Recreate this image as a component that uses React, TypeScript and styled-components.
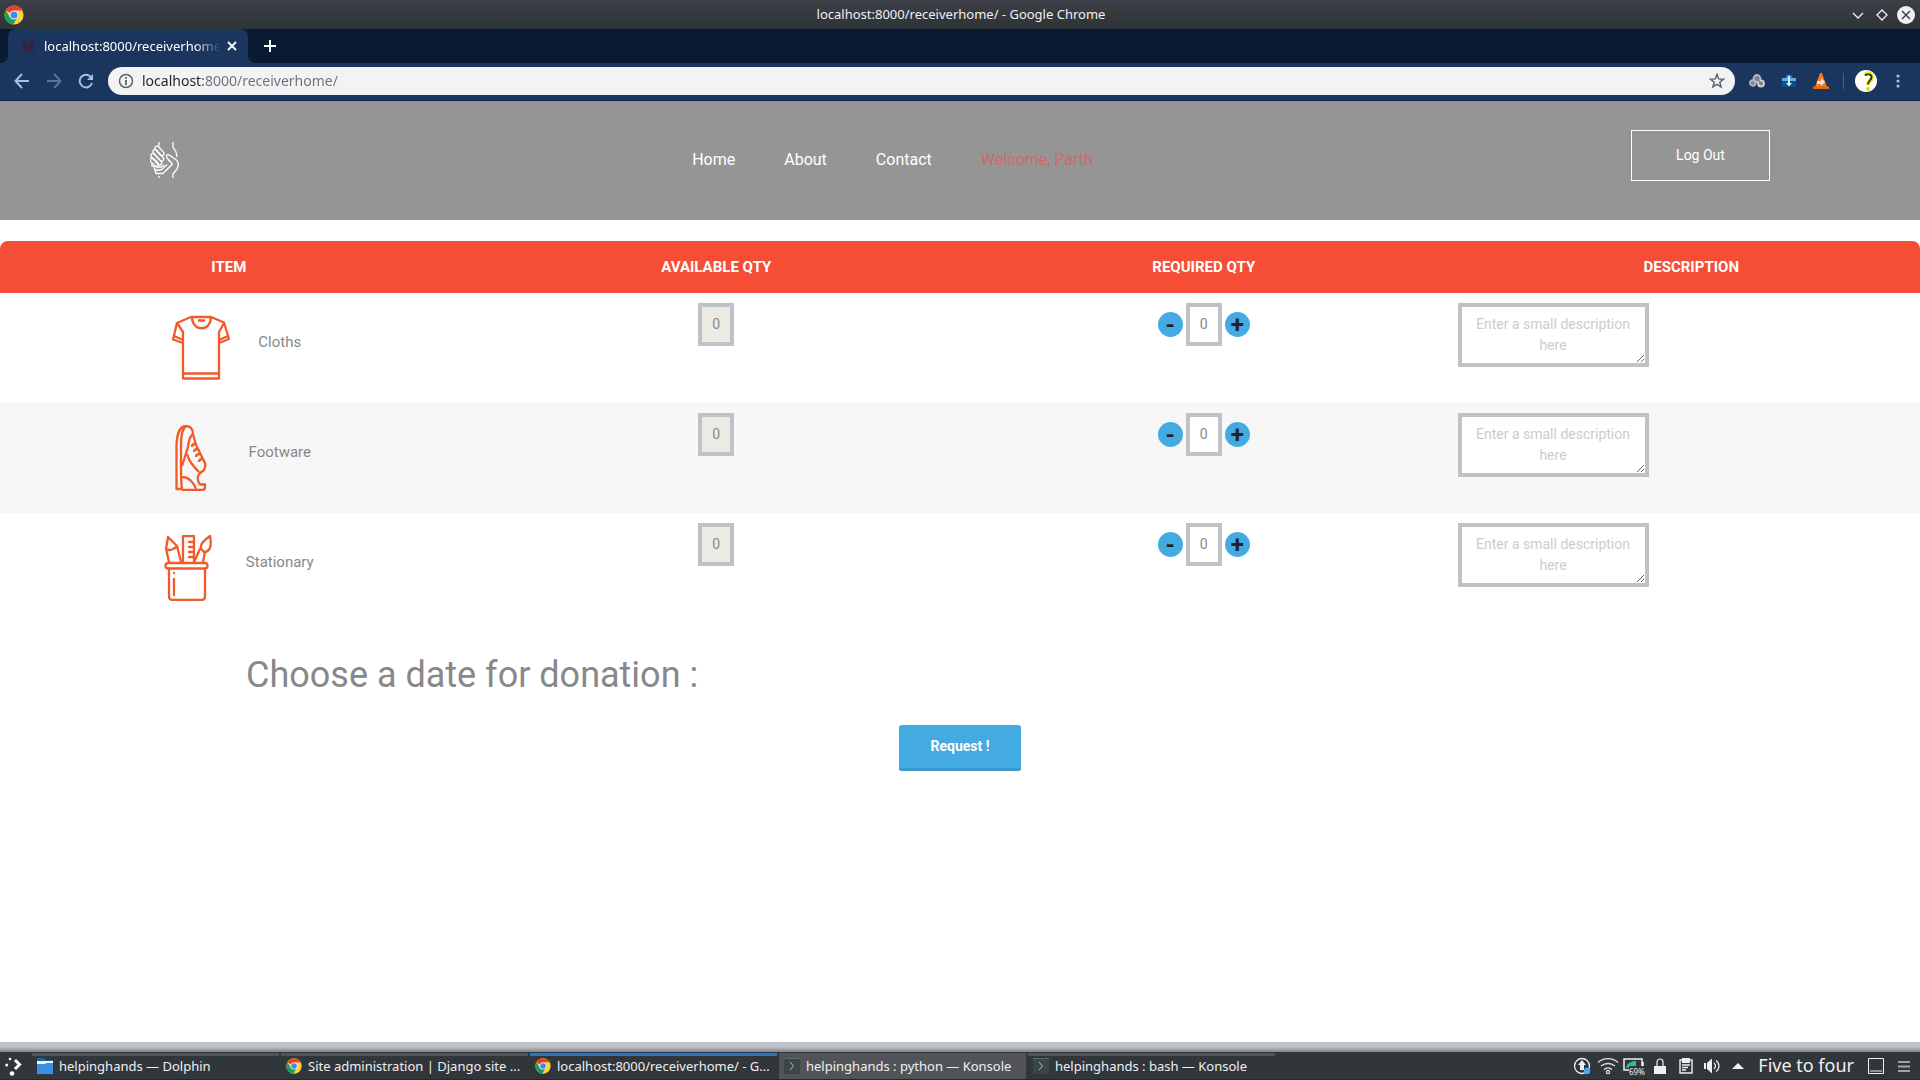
import React, { useState } from "react";
import styled, { createGlobalStyle, css } from "styled-components";

const GlobalStyle = createGlobalStyle`
  *, *::before, *::after { box-sizing: border-box; }
  body { margin: 0; background: #fff; }
  button, input, textarea { font: inherit; margin: 0; }
`;

const ui = `"Noto Sans", "Open Sans", sans-serif`;
const web = `Roboto, "Liberation Sans", sans-serif`;

const Screen = styled.div`
  min-height: 100vh;
  display: flex;
  flex-direction: column;
  font-family: ${ui};
  font-size: 13px;
`;

/* ---------- window frame ---------- */

const TitleBar = styled.header`
  display: grid;
  grid-template-columns: 1fr auto 1fr;
  align-items: center;
  height: 29px;
  padding: 0 2px 0 4px;
  color: #eff0f1;
  background: linear-gradient(#3d4048, #31363a 75%, #2f3437);
`;

const AppMark = styled.span`
  display: flex;
`;

const WindowTitle = styled.span`
  line-height: 29px;
`;

const WindowButtons = styled.div`
  display: flex;
  justify-content: flex-end;
`;

const BareButton = styled.button`
  display: flex;
  align-items: center;
  justify-content: center;
  padding: 0;
  border: 0;
  background: none;
  color: inherit;
`;

const WindowButton = styled(BareButton)`
  width: 24px;
  height: 28px;
`;

const TabStrip = styled.div`
  display: flex;
  height: 34px;
  padding-left: 8px;
  background: #0a1a33;
`;

const Tab = styled.div`
  position: relative;
  display: flex;
  align-items: center;
  width: 240px;
  padding: 0 8px 0 12px;
  border-radius: 8px 8px 0 0;
  background: #1a355e;
  color: #fff;

  &::before,
  &::after {
    content: "";
    position: absolute;
    bottom: 0;
    width: 8px;
    height: 8px;
  }
  &::before {
    right: 100%;
    background: radial-gradient(circle at 0 0, transparent 8px, #1a355e 8px);
  }
  &::after {
    left: 100%;
    background: radial-gradient(circle at 100% 0, transparent 8px, #1a355e 8px);
  }
`;

const TabTitle = styled.span`
  flex: 1;
  min-width: 0;
  margin: 0 4px 0 8px;
  overflow: hidden;
  white-space: nowrap;
  mask-image: linear-gradient(to right, #000 86%, transparent);
`;

const TabClose = styled(BareButton)`
  width: 16px;
  height: 16px;
`;

const NewTab = styled(BareButton)`
  width: 28px;
  margin-left: 8px;
  color: #fff;
`;

const Toolbar = styled.div`
  display: flex;
  align-items: center;
  gap: 4px;
  height: 38px;
  padding: 0 8px 2px;
  border-bottom: 1px solid #10264a;
  background: #1a355e;
  color: #a9bde0;
`;

const ToolButton = styled(BareButton)<{ $dim?: boolean }>`
  width: 28px;
  height: 28px;
  opacity: ${(p) => (p.$dim ? 0.45 : 1)};
`;

const AddressBar = styled.form`
  flex: 1;
  display: flex;
  align-items: center;
  gap: 8px;
  height: 28px;
  margin: 0 4px;
  padding: 0 10px;
  border-radius: 14px;
  background: #f1f3f4;
  color: #5f6368;
`;

const Address = styled.input`
  flex: 1;
  min-width: 0;
  height: 28px;
  padding: 0;
  border: 0;
  outline: 0;
  font-size: 14px;
  color: transparent;
  background: linear-gradient(to right, #202124 61px, #6d7175 61px);
  -webkit-background-clip: text;
  background-clip: text;
`;

const Divider = styled.span`
  width: 1px;
  height: 16px;
  margin: 0 4px;
  background: #43608c;
`;

/* ---------- web page ---------- */

const Page = styled.main`
  flex: 1;
  font-family: ${web};
  color: #888;
`;

const SiteHeader = styled.div`
  display: flex;
  align-items: center;
  justify-content: space-between;
  height: 119px;
  padding: 0 150px 2px;
  background: #959595;
`;

const Brand = styled.a`
  display: flex;
  color: #fff;
`;

const Menu = styled.nav`
  display: flex;
  gap: 49px;
  padding-right: 26px;
`;

const MenuLink = styled.a<{ $accent?: boolean }>`
  font-size: 16px;
  line-height: 24px;
  text-decoration: none;
  color: ${(p) => (p.$accent ? "#cd6b6b" : "#fff")};
`;

const LogOut = styled.button`
  width: 139px;
  height: 51px;
  margin-bottom: 8px;
  padding: 0 0 2px;
  border: 1px solid #fff;
  background: none;
  color: #fff;
  font-size: 14px;
`;

const TableFrame = styled.div`
  margin-top: 21px;
  overflow: hidden;
  border-radius: 8px 8px 0 0;
`;

const ItemTable = styled.table`
  width: calc(100% + 30px);
  margin-left: -15px;
  table-layout: fixed;
  border-collapse: collapse;
`;

const HeadCell = styled.th`
  height: 52px;
  padding: 0;
  background: #f64d36;
  color: #fff;
  font-size: 15px;
  font-weight: 700;
  line-height: 20px;
`;

const Row = styled.tr`
  height: 110px;
  &:nth-child(even) {
    background: #f7f7f7;
  }
`;

const Cell = styled.td`
  padding: 10px;
  vertical-align: top;
  text-align: center;
`;

const Item = styled.div`
  display: flex;
  justify-content: center;
  gap: 24px;
  padding: 12px 0 0 12px;
  font-size: 15px;
  line-height: 54px;

  svg {
    flex: none;
  }
`;

const field = css`
  border: 4px solid #bdc3c7;
  border-radius: 0;
  outline: 0;
  color: #888;
  text-align: center;
  font-size: 14px;
`;

const Quantity = styled.input`
  ${field}
  display: inline-block;
  width: 36px;
  height: 43px;
  padding: 0 0 2px;
  background: #fff;
  vertical-align: top;

  &:read-only {
    background: #ebebe4;
  }
`;

const Stepper = styled.div`
  display: flex;
  align-items: center;
  justify-content: center;
  gap: 3px;
`;

const StepButton = styled(BareButton)`
  width: 25px;
  height: 25px;
  border-radius: 50%;
  background: #43abe2;
  color: #212529;
  font-size: 24px;
  font-weight: 700;
  line-height: 24px;
`;

const Description = styled.textarea`
  ${field}
  display: block;
  width: 191px;
  height: 64px;
  padding: 7px 6px;
  line-height: 21px;
  background: #fff;
  overflow: hidden;
  resize: both;

  &::placeholder {
    color: #ccc;
  }
`;

const DateHeading = styled.h1`
  margin: 28px 0 0 246px;
  font-size: 36px;
  font-weight: 400;
  line-height: 48px;
`;

const RequestButton = styled.button`
  display: block;
  width: 122px;
  height: 46px;
  margin: 26px auto 0;
  padding: 0 0 4px;
  border: 0;
  border-radius: 3px;
  background: #43abe2;
  box-shadow: inset 0 -3px 0 #3c99cb;
  color: #fff;
  font-size: 14px;
  font-weight: 700;
`;

const PageEdge = styled.div`
  height: 10px;
  background: linear-gradient(#bdc3c7 50%, #7f8486);
`;

/* ---------- desktop panel ---------- */

const Panel = styled.footer`
  display: flex;
  height: 28px;
  padding-right: 2px;
  border-bottom: 1px solid #24282b;
  background: #31363b;
  color: #eff0f1;
`;

const Launcher = styled(BareButton)`
  width: 32px;
  padding-right: 4px;
`;

const TaskList = styled.div`
  display: flex;
  gap: 2px;
  flex: 1;
`;

const Task = styled.button<{ $bar: string; $fill?: string }>`
  display: flex;
  align-items: center;
  gap: 6px;
  width: 247px;
  margin-top: 1px;
  padding: 0 5px 3px;
  border: 0;
  border-top: 3px solid ${(p) => p.$bar};
  background: ${(p) => p.$fill || "transparent"};
  color: inherit;
  white-space: nowrap;

  svg {
    flex: none;
  }
`;

const Tray = styled.div`
  display: flex;
  align-items: center;
`;

const TrayButton = styled(BareButton)<{ $wide?: boolean }>`
  width: ${(p) => (p.$wide ? 28 : 26)}px;
  height: 27px;
`;

const Clock = styled.time`
  margin: 0 8px 0 7px;
  font-size: 18px;
  line-height: 27px;
`;

/* ---------- drawings ---------- */

const ChromeIcon = ({ size }: { size: number }) => (
  <svg width={size} height={size} viewBox="0 0 24 24">
    <circle cx="12" cy="12" r="11.5" fill="#fdd23e" />
    <path d="M12 12 2 6.3A11.5 11.5 0 0 1 22 6.5H12z" fill="#e2412f" />
    <path d="M12 12 7.3 15 2 6.3A11.5 11.5 0 0 0 11 23.5l5-8.5z" fill="#18a05d" />
    <circle cx="12" cy="12" r="5.4" fill="#f1f1f1" />
    <circle cx="12" cy="12" r="4.2" fill="#4285f4" />
  </svg>
);

const HandsIcon = ({ width, height }: { width: number; height: number }) => (
  <svg width={width} height={height} viewBox="0 0 30 36" fill="none" stroke="currentColor" strokeWidth="1.3">
    <path d="M9 0v4M9 34v2M23 0v5l3 5 1.2 5" />
    <g strokeLinejoin="round">
      <rect x="-2" y="-2" width="11.5" height="4.2" rx="2.1" transform="translate(7 6) rotate(48)" />
      <rect x="-2" y="-2" width="14" height="4.2" rx="2.1" transform="translate(5 9.5) rotate(48)" />
      <rect x="-2" y="-2" width="14" height="4.2" rx="2.1" transform="translate(3 13.5) rotate(48)" />
      <rect x="-2" y="-2" width="10" height="4.2" rx="2.1" transform="translate(2.2 18) rotate(44)" />
      <path d="M2 21v3l3 1M4 24.5l1 3.5 6 0 6-5.5M5 28l1 3.5h7l9.5-9.5-4.5-5M6 25h5l3-2M23 36v-4l4-5 1.5-4-1.5-4.500-7-5c-2-1.500-4-.5-3.500 1.500l3 4.500" />
    </g>
  </svg>
);

const ShirtIcon = () => (
  <svg width="66" height="66" viewBox="0 0 66 66" fill="none" stroke="#f15a29" strokeWidth="2.3" strokeLinejoin="round">
    <path d="M23 2h20l13 5.500L61 24l-10 4v35.500H15V28L5 24.500 9 8z" />
    <path d="M24 2c0 15 19 15 19 0M30 5.500h7M9 8l6 9v11M56 8l-5 9v11M6 21l9 4M60 21l-9 4M15 58.500h36" />
  </svg>
);

const ShoeIcon = () => (
  <svg width="66" height="66" viewBox="0 0 66 66" fill="none" stroke="#f15a29" strokeWidth="2.3" strokeLinejoin="round">
    <path d="M23 64H17.500V20C18 7 22 1 27 1c4 0 7 3 7 8l3 11 9 18c1 3 0 5-1 7l-5 4c-2 4-1 8 1 10.500h5V62c0 2-1 3-3 3H25c-2 0-2-1-2-1z" />
    <path d="M27 1c-4 3-5 10-5 18v23c0 8 0 15 1 22M34 9c-5 4-4 9-5 13l-6 19M28 29c2 8 7 13 12 18M23 52c7 0 12 6 14 12M33 22c0-2 1-3 3-3M35 27c0-2 1-3 4-3M37 32c0-2 1-3 4-3M40 37c0-2 1-3 4-3" />
  </svg>
);

const PotIcon = () => (
  <svg width="66" height="66" viewBox="0 0 66 66" fill="none" stroke="#f15a29" strokeWidth="2.3" strokeLinejoin="round" strokeLinecap="round">
    <rect x="9.500" y="28" width="42" height="5.500" rx="2.700" />
    <path d="M13 33.500V61q0 4 4 4h28q4 0 4-4V33.500M18 38v.1M18 44v16" />
    <path d="m13 27-3-13 2-12 9 9 4 16M10 14c3 2 8 1 11-3M27 27V1h11v26M33 7h4M33 12h4M33 17h4M33 22h4" />
    <path d="M48 17c-5-4-5-8 6-16 2 10 0 16-6 16zM44 14l-6 13M49 17l-2 10" />
  </svg>
);

const Svg16 = ({ children, size = 16 }: { children: React.ReactNode; size?: number }) => (
  <svg width={size} height={size} viewBox="0 0 16 16" fill="none" stroke="currentColor" strokeWidth="2">
    {children}
  </svg>
);

const ConsoleIcon = () => (
  <svg width="16" height="16" viewBox="0 0 16 16">
    <path d="M0 0h16v16H0z" fill="#3a4547" />
    <path d="M0 0h16v1H0z" fill="#5d6a6c" />
    <path d="m6 4 3.500 4L6 12" fill="none" stroke="#b4bfc0" />
  </svg>
);

const FolderIcon = () => (
  <svg width="16" height="16" viewBox="0 0 16 16">
    <path d="M0 0h7l2 2h7v5H0z" fill="#18639b" />
    <path d="M0 3h16v3H0z" fill="#f4f9fc" />
    <path d="M0 6h8l1-1h7v11H0z" fill="#3792e6" />
  </svg>
);

/* ---------- data ---------- */

const items = [
  { name: "Cloths", Icon: ShirtIcon },
  { name: "Footware", Icon: ShoeIcon },
  { name: "Stationary", Icon: PotIcon },
];

const tasks = [
  { title: "helpinghands — Dolphin", bar: "#4f5357", icon: <FolderIcon /> },
  { title: "Site administration | Django site ...", bar: "#4f5357", icon: <ChromeIcon size={16} /> },
  { title: "localhost:8000/receiverhome/ - G...", bar: "#2778c9", icon: <ChromeIcon size={16} /> },
  { title: "helpinghands : python — Konsole", bar: "#505459", fill: "#505459", icon: <ConsoleIcon /> },
  { title: "helpinghands : bash — Konsole", bar: "#4f5357", icon: <ConsoleIcon /> },
];

const ItemRow = ({ name, Icon }: { name: string; Icon: () => React.JSX.Element }) => {
  const [count, setCount] = useState(0);
  return (
    <Row>
      <Cell>
        <Item>
          <Icon />
          <span>{name}</span>
        </Item>
      </Cell>
      <Cell>
        <Quantity aria-label={`${name} available`} value="0" readOnly />
      </Cell>
      <Cell>
        <Stepper>
          <StepButton aria-label={`Fewer ${name}`} onClick={() => setCount(Math.max(0, count - 1))}>-</StepButton>
          <Quantity
            aria-label={`${name} required`}
            inputMode="numeric"
            value={count}
            onChange={(e) => setCount(Number(e.target.value) || 0)}
          />
          <StepButton aria-label={`More ${name}`} onClick={() => setCount(count + 1)}>+</StepButton>
        </Stepper>
      </Cell>
      <Cell>
        <Description aria-label={`${name} description`} placeholder="Enter a small description here" />
      </Cell>
    </Row>
  );
};

export default function App() {
  return (
    <Screen>
      <GlobalStyle />
      <TitleBar>
        <AppMark><ChromeIcon size={20} /></AppMark>
        <WindowTitle>localhost:8000/receiverhome/ - Google Chrome</WindowTitle>
        <WindowButtons>
          <WindowButton aria-label="Minimize">
            <svg width="12" height="12" viewBox="0 0 12 12" fill="none" stroke="currentColor" strokeWidth="1.300"><path d="m1 4 5 5 5-5" /></svg>
          </WindowButton>
          <WindowButton aria-label="Maximize">
            <svg width="12" height="12" viewBox="0 0 12 12" fill="none" stroke="currentColor" strokeWidth="1.300"><path d="m6 1 5 5-5 5-5-5z" /></svg>
          </WindowButton>
          <WindowButton aria-label="Close">
            <svg width="18" height="18" viewBox="0 0 18 18"><circle cx="9" cy="9" r="9" fill="#eff0f1" /><path d="m5 5 8 8m0-8-8 8" stroke="#31363b" strokeWidth="1.300" /></svg>
          </WindowButton>
        </WindowButtons>
      </TitleBar>

      <TabStrip>
        <Tab>
          <svg width="16" height="16" viewBox="-3 0 36 36" fill="none" stroke="#4b1730" strokeWidth="2.500">
            <path d="m8 4 8 8M5 9l10 11M2 14l12 12M2 20l5 9h8l8-8-5-6M9 0v5M9 32v4M23 0v5l5 9M19 13l9 7v6l-5 6v4" />
          </svg>
          <TabTitle>localhost:8000/receiverhome/</TabTitle>
          <TabClose aria-label="Close tab"><svg width="10" height="10" viewBox="0 0 10 10" stroke="#fff" strokeWidth="1.800"><path d="m1 1 8 8m0-8-8 8" /></svg></TabClose>
        </Tab>
        <NewTab aria-label="New tab"><svg width="12" height="12" viewBox="0 0 12 12" stroke="#fff" strokeWidth="2"><path d="M6 0v12M0 6h12" /></svg></NewTab>
      </TabStrip>

      <Toolbar>
        <ToolButton aria-label="Back"><Svg16><path d="M15 8H2M8 1 1.500 8 8 15" /></Svg16></ToolButton>
        <ToolButton aria-label="Forward" $dim><Svg16><path d="M1 8h13M8 1l6.500 7L8 15" /></Svg16></ToolButton>
        <ToolButton aria-label="Reload"><Svg16><path d="M13.200 4.500A6.300 6.300 0 1 0 14 10" /><path d="M15 1v6H9z" fill="currentColor" stroke="none" /></Svg16></ToolButton>
        <AddressBar onSubmit={(e) => e.preventDefault()}>
          <svg width="16" height="16" viewBox="0 0 16 16" fill="none" stroke="currentColor" strokeWidth="1.500">
            <circle cx="8" cy="8" r="6.500" /><path d="M8 7v5M8 4v1.700" strokeWidth="1.800" />
          </svg>
          <Address aria-label="Address" defaultValue="localhost:8000/receiverhome/" />
          <BareButton type="button" aria-label="Bookmark this page">
            <svg width="16" height="16" viewBox="0 0 16 16" fill="none" stroke="currentColor" strokeWidth="1.500">
              <path d="m8 1.500 1.700 4.400 4.800.3-3.700 3 1.300 4.700L8 11.300l-4.100 2.600 1.300-4.700-3.700-3 4.800-.3z" />
            </svg>
          </BareButton>
        </AddressBar>
        <ToolButton aria-label="Extension: chain">
          <svg width="16" height="16" viewBox="0 0 16 16" fill="#85898d" stroke="#b4b7b9" strokeWidth="1.800">
            <circle cx="8" cy="5.500" r="3.500" /><circle cx="3.800" cy="10" r="2.800" /><circle cx="12" cy="10.500" r="3" stroke="#d0d2d3" /><path d="m7 5 6 6" stroke="#777c80" strokeWidth="1.500" />
          </svg>
        </ToolButton>
        <ToolButton aria-label="Extension: downloads">
          <svg width="16" height="16" viewBox="0 0 16 16">
            <circle cx="8" cy="5" r="3.500" fill="#2d7be0" /><path d="M1 5h14v3H1z" fill="#63aee0" /><path d="M1 8h14v6H1z" fill="#0d4f8a" /><path d="M7 3h2v7h2l-3 3.500L5 10h2z" fill="#d6efff" />
          </svg>
        </ToolButton>
        <ToolButton aria-label="Extension: media player">
          <svg width="16" height="16" viewBox="0 0 16 16">
            <path d="M7 0h2l5 14H2z" fill="#f47b20" /><path d="M0 13.500h16V16H0z" fill="#e86a10" /><path d="M4 8h4V5l4 4-4 4v-2H4z" fill="#f0e6e0" />
          </svg>
        </ToolButton>
        <Divider />
        <ToolButton aria-label="Profile">
          <svg width="22" height="22" viewBox="0 0 22 22">
            <circle cx="11" cy="11" r="11" fill="#fff" />
            <path d="M9.500 5c2-3 8-2 7.500 2s-4 4-4 8" fill="none" stroke="#f5ee15" strokeWidth="4" />
            <path d="M10 5.500c2-2 7-1.500 6.500 2s-3.500 3-3.500 7" fill="none" stroke="#33320b" strokeWidth="1.800" />
            <circle cx="13" cy="19" r="2" fill="#e3dc14" />
          </svg>
        </ToolButton>
        <ToolButton aria-label="Browser menu">
          <svg width="4" height="14" viewBox="0 0 4 14" fill="currentColor"><circle cx="2" cy="2" r="1.600" /><circle cx="2" cy="7" r="1.600" /><circle cx="2" cy="12" r="1.600" /></svg>
        </ToolButton>
      </Toolbar>

      <Page>
        <SiteHeader>
          <Brand href="#home" aria-label="Helping hands"><HandsIcon width={30} height={36} /></Brand>
          <Menu>
            <MenuLink href="#home">Home</MenuLink>
            <MenuLink href="#about">About</MenuLink>
            <MenuLink href="#contact">Contact</MenuLink>
            <MenuLink href="#profile" $accent>Welcome, Parth</MenuLink>
          </Menu>
          <LogOut>Log Out</LogOut>
        </SiteHeader>

        <TableFrame>
          <ItemTable>
            <thead>
              <tr>
                <HeadCell scope="col">ITEM</HeadCell>
                <HeadCell scope="col">AVAILABLE QTY</HeadCell>
                <HeadCell scope="col">REQUIRED QTY</HeadCell>
                <HeadCell scope="col">DESCRIPTION</HeadCell>
              </tr>
            </thead>
            <tbody>
              {items.map((item) => <ItemRow key={item.name} {...item} />)}
            </tbody>
          </ItemTable>
        </TableFrame>

        <DateHeading>Choose a date for donation :</DateHeading>
        <RequestButton>Request !</RequestButton>
      </Page>
      <PageEdge />

      <Panel>
        <Launcher aria-label="Application launcher">
          <svg width="18" height="20" viewBox="0 0 18 20" fill="#fff">
            <circle cx="5" cy="3" r="1.300" /><circle cx="1.700" cy="9" r="1.500" /><circle cx="7" cy="17.500" r="2.300" />
            <path d="m10 4 4.500 4.500L10 13" fill="none" stroke="#fff" strokeWidth="3" />
          </svg>
        </Launcher>
        <TaskList>
          {tasks.map((t) => (
            <Task key={t.title} $bar={t.bar} $fill={t.fill}>
              {t.icon}
              <span>{t.title}</span>
            </Task>
          ))}
        </TaskList>
        <Tray>
          <TrayButton aria-label="Updates">
            <svg width="18" height="18" viewBox="0 0 18 18"><circle cx="9" cy="9" r="7.500" fill="none" stroke="#eff0f1" strokeWidth="1.300" /><path d="m9 3 4 5h-2v5H7V8H5z" fill="#eff0f1" /><circle cx="14" cy="14" r="3.200" fill="#3daee9" /></svg>
          </TrayButton>
          <TrayButton aria-label="Network">
            <svg width="22" height="18" viewBox="0 0 22 18" fill="none" stroke="#dfe1e2" strokeWidth="1.300"><path d="M1 5.500a15 15 0 0 1 20 0M4 9a11 11 0 0 1 14 0M7 12.500a6 6 0 0 1 8 0" /><circle cx="11" cy="15" r="1.600" /></svg>
          </TrayButton>
          <TrayButton aria-label="Battery">
            <svg width="22" height="20" viewBox="0 0 22 20"><path d="M1 3h18v11H1zM20 6v4" fill="none" stroke="#eff0f1" strokeWidth="1.500" /><path d="M3 12C4 7 8 5 13 5v6z" fill="#2bbf9b" /><path d="M6 10h16v10H6z" fill="#31363b" /><text x="6" y="19" fontSize="8" fontFamily="Noto Sans, sans-serif" fill="#eff0f1">69%</text></svg>
          </TrayButton>
          <TrayButton aria-label="Lock">
            <svg width="12" height="16" viewBox="0 0 12 16"><path d="M3 8V4a3 3 0 0 1 6 0v4" fill="none" stroke="#eff0f1" strokeWidth="1.200" /><path d="M0 8h12v8H0z" fill="#eff0f1" /></svg>
          </TrayButton>
          <TrayButton aria-label="Clipboard">
            <svg width="14" height="16" viewBox="0 0 14 16"><path d="M1 2h12v13H1zM3 7h8M3 9.500h6M3 12h4" fill="none" stroke="#eff0f1" strokeWidth="1.400" /><path d="M3 0h8v5H3z" fill="#eff0f1" /></svg>
          </TrayButton>
          <TrayButton aria-label="Volume">
            <svg width="17" height="16" viewBox="0 0 17 16"><path d="M0 5h2v6H0zM3 5l5-4.500v15L3 11z" fill="#eff0f1" /><path d="M10 5c2 2 2 4 0 6M12 2.500c4 3 4 8 0 11" fill="none" stroke="#eff0f1" strokeWidth="1.200" /></svg>
          </TrayButton>
          <TrayButton aria-label="Show hidden icons">
            <svg width="12" height="6" viewBox="0 0 12 6" fill="#eff0f1"><path d="m6 0 6 6H0z" /></svg>
          </TrayButton>
          <Clock>Five to four</Clock>
          <TrayButton aria-label="Show desktop" $wide>
            <svg width="16" height="16" viewBox="0 0 16 16" fill="none" stroke="#eff0f1"><path d="M.5.5h15v15H.5zM2 13h12" /></svg>
          </TrayButton>
          <TrayButton aria-label="Panel settings" $wide>
            <svg width="12" height="12" viewBox="0 0 12 12" stroke="#a0a3a6" strokeWidth="2"><path d="M0 2h12M0 6.500h12M0 11h12" /></svg>
          </TrayButton>
        </Tray>
      </Panel>
    </Screen>
  );
}
